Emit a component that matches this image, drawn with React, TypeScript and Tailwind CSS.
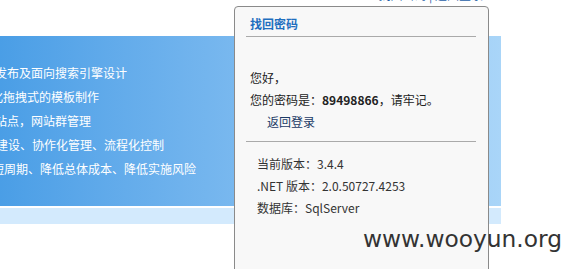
import React from 'react';

const cjk = '"Noto Sans CJK SC", "Liberation Sans", sans-serif';

const features = [
  { text: '发布及面向搜索引擎设计', offset: 'ml-[-5px]' },
  { text: '化拖拽式的模板制作', offset: 'ml-[-9px]' },
  { text: '站点，网站群管理', offset: 'ml-[-5px]' },
  { text: '建设、协作化管理、流程化控制', offset: 'ml-[-4px]' },
  { text: '短周期、降低总体成本、降低实施风险', offset: 'ml-[-8px]' },
];

export default function App() {
  return (
    <div className="relative w-[569px] h-[269px] overflow-hidden bg-white" style={{ fontFamily: cjk }}>
      {/* top strip, links cut off by the window */}
      <div className="h-[36px] flex justify-end pr-[86px]">
        <div className="mt-[-12px] text-[12px] leading-[14px] text-[#1f5fa8]">找回密码 | 返回登录</div>
      </div>

      {/* blue banner */}
      <div className="w-[501px] h-[170px] bg-gradient-to-r from-[#4a9ee6] to-[#a9d5f8] pt-[25px] flex flex-col">
        {features.map((f) => (
          <div key={f.text} className={`${f.offset} text-[12px] leading-[24px] text-white whitespace-nowrap`}>
            {f.text}
          </div>
        ))}
      </div>
      <div className="h-[2px]" />
      <div className="w-[501px] h-[16px] bg-[#d3eafd]" />

      {/* password dialog */}
      <div className="absolute left-[234px] top-[6px] w-[255px] h-[290px] bg-[#f8f8f8] border border-[#8a8a8a] rounded-t-[4px] px-[11px]">
        <div className="pt-[7px] pl-[4px] text-[12px] leading-[20px] font-bold text-[#1f6fbf]">找回密码</div>
        <div className="mt-[2px] h-px bg-[#aaaaaa] mr-[1px]" />

        <div className="pt-[30px] pl-[4px] text-[12px] leading-[22px] text-[#222222]">
          <div>您好，</div>
          <div>
            您的密码是：<span className="font-bold">89498866</span>，请牢记。
          </div>
          <div className="pl-[17px] text-[#1b3a66]">返回登录</div>
        </div>
        <div className="mt-[8px] h-px bg-[#aaaaaa] mr-[1px]" />

        <div className="pt-[11px] pl-[11px] text-[12px] leading-[22px] text-[#333333]">
          <div>当前版本：3.4.4</div>
          <div>.NET 版本：2.0.50727.4253</div>
          <div>数据库：SqlServer</div>
        </div>
      </div>

      {/* watermark */}
      <div
        className="absolute left-[363px] top-[225px] text-[23.3px] leading-[28px] text-[#333333] whitespace-nowrap"
        style={{ fontFamily: '"DejaVu Sans", sans-serif' }}
      >
        www.wooyun.org
      </div>
    </div>
  );
}
